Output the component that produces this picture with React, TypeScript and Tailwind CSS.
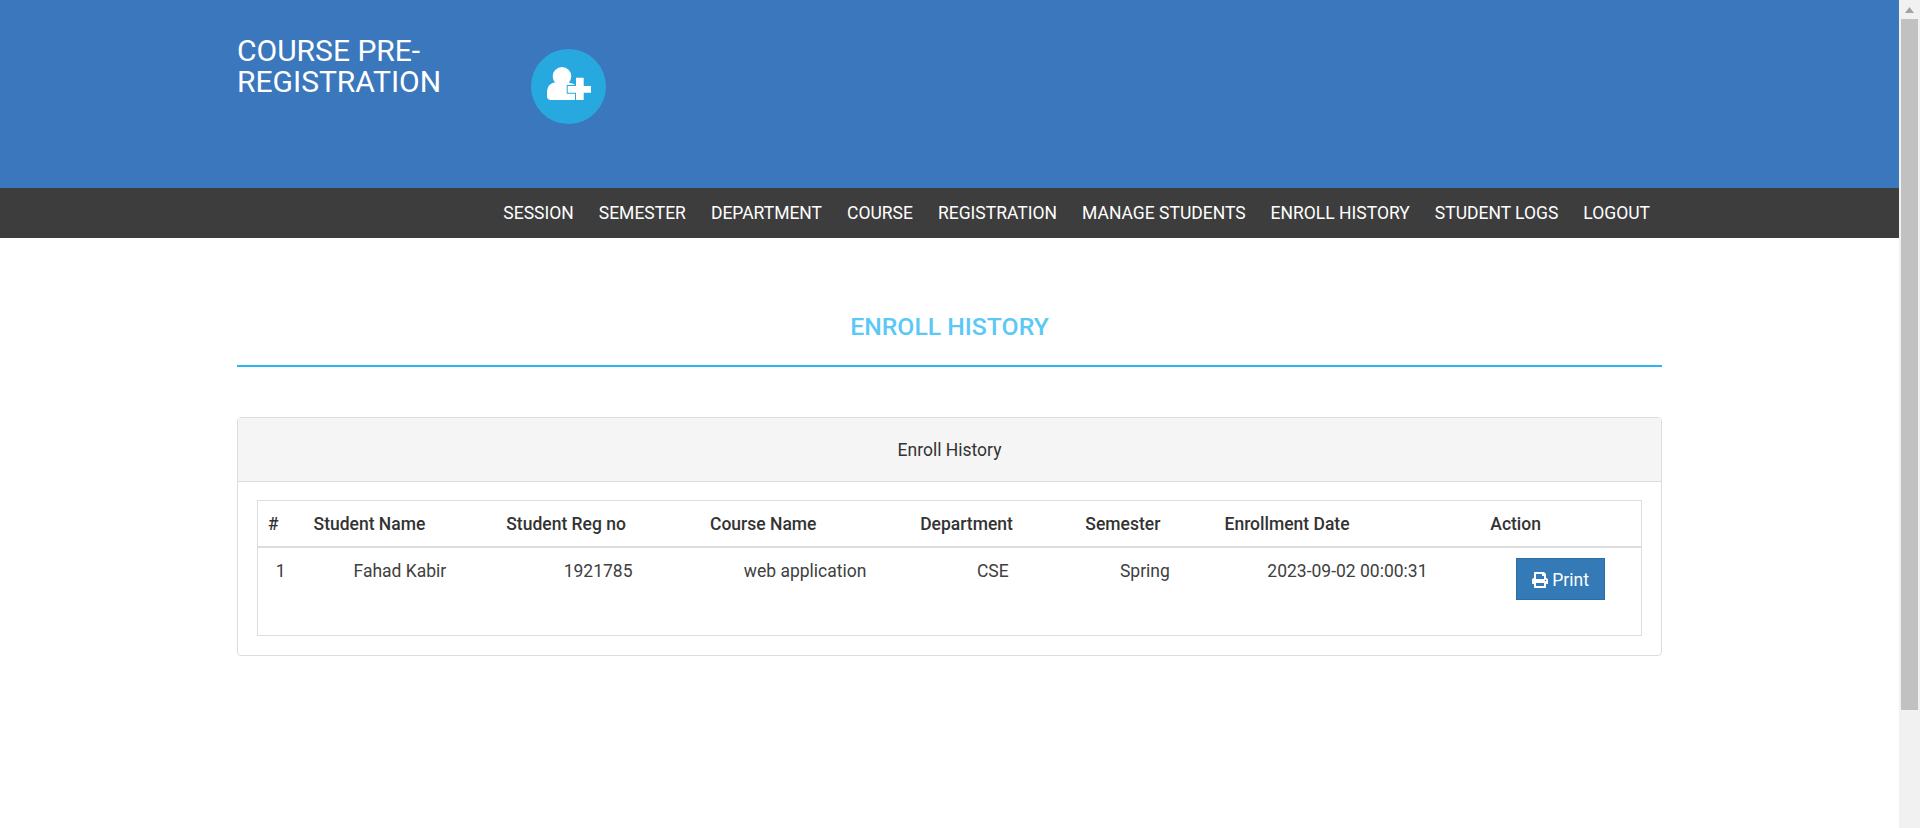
import { FaPrint } from "react-icons/fa";

const navItems = [
  "SESSION",
  "SEMESTER",
  "DEPARTMENT",
  "COURSE",
  "REGISTRATION",
  "MANAGE STUDENTS",
  "ENROLL HISTORY",
  "STUDENT LOGS",
  "LOGOUT",
];

const columns = [
  { name: "#", width: "w-[46px]" },
  { name: "Student Name", width: "w-[192.5px]" },
  { name: "Student Reg no", width: "w-[203.5px]" },
  { name: "Course Name", width: "w-[210px]" },
  { name: "Department", width: "w-[165px]" },
  { name: "Semester", width: "w-[139px]" },
  { name: "Enrollment Date", width: "w-[265.5px]" },
  { name: "Action", width: "w-[161px]" },
];

const row = ["1", "Fahad Kabir", "1921785", "web application", "CSE", "Spring", "2023-09-02 00:00:31"];

const App = () => {
  return (
    <div className="flex h-[828px] overflow-hidden bg-white font-['Roboto',sans-serif] text-[17.5px] text-[#333]">
      <div className="flex-1 min-w-0">
        <header className="h-[188px] bg-[#3b77bd]">
          <div className="mx-auto flex w-[1425px] items-start">
            <h1 className="mt-[35px] w-[294px] text-[30px] leading-[31px] font-normal text-white">
              COURSE PRE-
              <br />
              REGISTRATION
            </h1>
            <div className="mt-[49px] flex h-[75px] w-[75px] items-center justify-center rounded-full bg-[#27a9e0]">
              <svg viewBox="0 0 44 33" className="mb-[6px] h-[33px] w-[44px]">
                <circle cx="15" cy="9.3" r="9.3" fill="#fff" />
                <path d="M4 33a4 4 0 0 1-4-4v-4c0-5 3-9 8-9.5h12c4 0 7 1 9 4V33z" fill="#fff" />
                <path d="M29 10.7h7.7V19H44v6.7h-7.3v7.6H29v-7.6h-8.3V19H29z" fill="#fff" stroke="#27a9e0" strokeWidth="2" paintOrder="stroke" />
              </svg>
            </div>
          </div>
        </header>
        <nav className="flex h-[50px] items-center justify-end bg-[#3d3d3d]">
          <ul className="mr-[237px] flex gap-[25px] pr-[12px] text-[17.5px] font-normal text-white">
            {navItems.map((item) => (
              <li key={item}>{item}</li>
            ))}
          </ul>
        </nav>
        <main className="mx-auto w-[1425px]">
          <h2 className="mt-[76px] border-b-2 border-[#29b6f0] pb-[25px] text-center text-[24.75px] leading-[26px] font-medium text-[#5bc8f5]">
            ENROLL HISTORY
          </h2>
          <section className="mt-[50px] rounded-[4px] border border-[#ddd]">
            <div className="flex h-[64px] items-center justify-center border-b border-[#ddd] bg-[#f5f5f5] pt-[1px]">
              Enroll History
            </div>
            <div className="px-[19px] pt-[18px] pb-[19px]">
              <table className="w-full table-fixed border-collapse border border-[#ddd]">
                <thead>
                  <tr className="border-b-2 border-[#ddd]">
                    {columns.map((col) => (
                      <th key={col.name} className={`${col.width} px-[10px] pt-[10px] pb-[9px] text-left font-medium`}>
                        {col.name}
                      </th>
                    ))}
                  </tr>
                </thead>
                <tbody>
                  <tr>
                    {row.map((cell) => (
                      <td key={cell} className="px-[10px] pt-[11px] pb-[8px] text-center align-top font-normal leading-[24px] text-[#404040]">
                        {cell}
                      </td>
                    ))}
                    <td className="px-[10px] pt-[10px] pb-[35px] text-center align-top">
                      <button className="inline-flex h-[42px] w-[89px] items-center justify-center gap-[4px] border border-[#2e6da4] bg-[#337ab7] pt-[1px] text-white">
                        <FaPrint className="text-[16px]" />
                        Print
                      </button>
                    </td>
                  </tr>
                </tbody>
              </table>
            </div>
          </section>
        </main>
      </div>
      <aside className="flex w-[21px] shrink-0 flex-col items-center bg-[#f1f1f1]">
        <svg viewBox="0 0 9 6" className="mt-[7px] h-[6px] w-[9px]">
          <path d="M4.5 0 9 6H0z" fill="#a3a3a3" />
        </svg>
        <div className="mt-[6px] h-[691px] w-[17px] bg-[#c1c1c1]" />
      </aside>
    </div>
  );
};

export default App;
